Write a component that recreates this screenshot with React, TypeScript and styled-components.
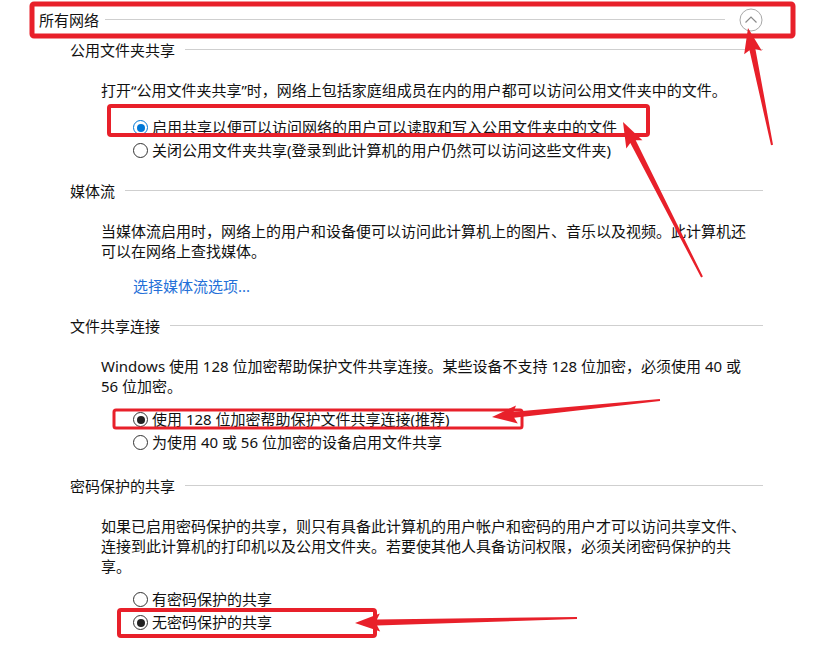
import React from 'react';
import styled, { createGlobalStyle } from 'styled-components';

const GlobalStyle = createGlobalStyle`
  html, body {
    margin: 0;
    padding: 0;
    background: #fff;
  }
  body {
    font-family: "Noto Sans", "Noto Sans CJK SC", sans-serif;
    font-size: 15px;
    color: #111;
  }
`

const Page = styled.div`
  position: relative;
  width: 834px;
  height: 654px;
  overflow: hidden;
  background: #fff;
`

const Header = styled.div`
  display: flex;
  align-items: center;
  height: 40px;
  padding-left: 39px;
  width: 724px;
  gap: 6px;
`

const Title = styled.span`
  line-height: 20px;
  white-space: nowrap;
`

const Rule = styled.div`
  flex: 1;
  height: 1px;
  background: #cfcfcf;
  margin-top: -2px;
`

const Collapse = styled.svg`
  width: 24px;
  height: 24px;
  margin-left: 8px;
  flex-shrink: 0;
`

const Content = styled.div`
  margin-left: 70px;
  width: 693px;
`

const Section = styled.section<{ $top: number }>`
  margin-top: ${p => p.$top}px;
`

const Heading = styled.div`
  display: flex;
  align-items: center;
  gap: 10px;
  height: 20px;
`

const Body = styled.div`
  padding-left: 31px;
  margin-top: 20px;
`

const Text = styled.div`
  display: flex;
  flex-direction: column;
`

const Line = styled.span`
  display: block;
  height: 20px;
  line-height: 20px;
  white-space: nowrap;
`

const Options = styled.div<{ $top: number }>`
  display: flex;
  flex-direction: column;
  gap: 1px;
  margin-top: ${p => p.$top}px;
  padding-left: 32px;
`

const Option = styled.label`
  display: flex;
  align-items: center;
  gap: 4px;
  height: 22px;
  line-height: 20px;
  white-space: nowrap;
`

const Dot = styled.span<{ $checked?: boolean; $focus?: boolean }>`
  width: 13px;
  height: 13px;
  border-radius: 50%;
  border: 1px solid ${p => (p.$focus ? '#0078d7' : '#333')};
  display: flex;
  align-items: center;
  justify-content: center;
  flex-shrink: 0;
  margin-top: 1px;

  &::after {
    content: '';
    width: 8px;
    height: 8px;
    border-radius: 50%;
    background: ${p => (p.$focus ? '#0078d7' : '#222')};
    display: ${p => (p.$checked ? 'block' : 'none')};
  }
`

const MediaLink = styled.a`
  display: block;
  margin-top: 15px;
  padding-left: 32px;
  height: 20px;
  line-height: 20px;
  color: #2470d8;
  text-decoration: none;
  cursor: pointer;
`

const Marks = styled.svg`
  position: absolute;
  top: 0;
  left: 0;
  pointer-events: none;
`

const RED = '#e8202a';

function arrowPoints(x1: number, y1: number, x2: number, y2: number) {
  const len = Math.hypot(x2 - x1, y2 - y1);
  const dx = (x2 - x1) / len;
  const dy = (y2 - y1) / len;
  const nx = -dy;
  const ny = dx;
  const L = 22;
  const W = 9;
  const bx = x2 - dx * L;
  const by = y2 - dy * L;
  const wx = bx - dx * 3;
  const wy = by - dy * 3;
  const pts = [
    [x1 + nx * 1, y1 + ny * 1],
    [bx + nx * 3, by + ny * 3],
    [wx + nx * W, wy + ny * W],
    [x2, y2],
    [wx - nx * W, wy - ny * W],
    [bx - nx * 3, by - ny * 3],
    [x1 - nx * 1, y1 - ny * 1],
  ];
  return pts.map(p => `${p[0].toFixed(1)},${p[1].toFixed(1)}`).join(' ');
}

const boxes = [
  { x: 32, y: 4, w: 761, h: 32, s: 5 },
  { x: 109, y: 106, w: 539, h: 29, s: 4 },
  { x: 114, y: 410, w: 408, h: 18, s: 3 },
  { x: 119, y: 610, w: 256, h: 26, s: 4 },
];

const arrows = [
  [772, 145, 748, 28],
  [702, 277, 623, 122],
  [660, 400, 492, 417],
  [577, 618, 355, 623],
];

const Paragraph = ({ lines }: { lines: string[] }) => (
  <Text>
    {lines.map(l => <Line key={l}>{l}</Line>)}
  </Text>
);

export default function App() {
  return (
    <Page>
      <GlobalStyle />
      <Header>
        <Title>所有网络</Title>
        <Rule />
        <Collapse viewBox="0 0 24 24">
          <circle cx="12" cy="12" r="11" fill="none" stroke="#a8a8a8" strokeWidth="1" />
          <path d="M6.5 14.5 L12 9 L17.5 14.5" fill="none" stroke="#8a8a8a" strokeWidth="1.2" />
        </Collapse>
      </Header>

      <Content>
        <Section $top={0}>
          <Heading>
            <Title>公用文件夹共享</Title>
            <Rule />
          </Heading>
          <Body>
            <Paragraph lines={['打开“公用文件夹共享”时，网络上包括家庭组成员在内的用户都可以访问公用文件夹中的文件。']} />
            <Options $top={16}>
              <Option><Dot $checked $focus />启用共享以便可以访问网络的用户可以读取和写入公用文件夹中的文件</Option>
              <Option><Dot />关闭公用文件夹共享(登录到此计算机的用户仍然可以访问这些文件夹)</Option>
            </Options>
          </Body>
        </Section>

        <Section $top={20}>
          <Heading>
            <Title>媒体流</Title>
            <Rule />
          </Heading>
          <Body>
            <Paragraph
              lines={[
                '当媒体流启用时，网络上的用户和设备便可以访问此计算机上的图片、音乐以及视频。此计算机还',
                '可以在网络上查找媒体。',
              ]}
            />
            <MediaLink>选择媒体流选项...</MediaLink>
          </Body>
        </Section>

        <Section $top={20}>
          <Heading>
            <Title>文件共享连接</Title>
            <Rule />
          </Heading>
          <Body>
            <Paragraph
              lines={[
                'Windows 使用 128 位加密帮助保护文件共享连接。某些设备不支持 128 位加密，必须使用 40 或',
                '56 位加密。',
              ]}
            />
            <Options $top={12}>
              <Option><Dot $checked />使用 128 位加密帮助保护文件共享连接(推荐)</Option>
              <Option><Dot />为使用 40 或 56 位加密的设备启用文件共享</Option>
            </Options>
          </Body>
        </Section>

        <Section $top={23}>
          <Heading>
            <Title>密码保护的共享</Title>
            <Rule />
          </Heading>
          <Body>
            <Paragraph
              lines={[
                '如果已启用密码保护的共享，则只有具备此计算机的用户帐户和密码的用户才可以访问共享文件、',
                '连接到此计算机的打印机以及公用文件夹。若要使其他人具备访问权限，必须关闭密码保护的共',
                '享。',
              ]}
            />
            <Options $top={12}>
              <Option><Dot />有密码保护的共享</Option>
              <Option><Dot $checked />无密码保护的共享</Option>
            </Options>
          </Body>
        </Section>
      </Content>

      <Marks width="834" height="654" viewBox="0 0 834 654">
        {boxes.map((b, i) => (
          <rect key={i} x={b.x} y={b.y} width={b.w} height={b.h} rx="2" fill="none" stroke={RED} strokeWidth={b.s} />
        ))}
        {arrows.map((a, i) => (
          <polygon key={i} points={arrowPoints(a[0], a[1], a[2], a[3])} fill={RED} />
        ))}
      </Marks>
    </Page>
  );
}
